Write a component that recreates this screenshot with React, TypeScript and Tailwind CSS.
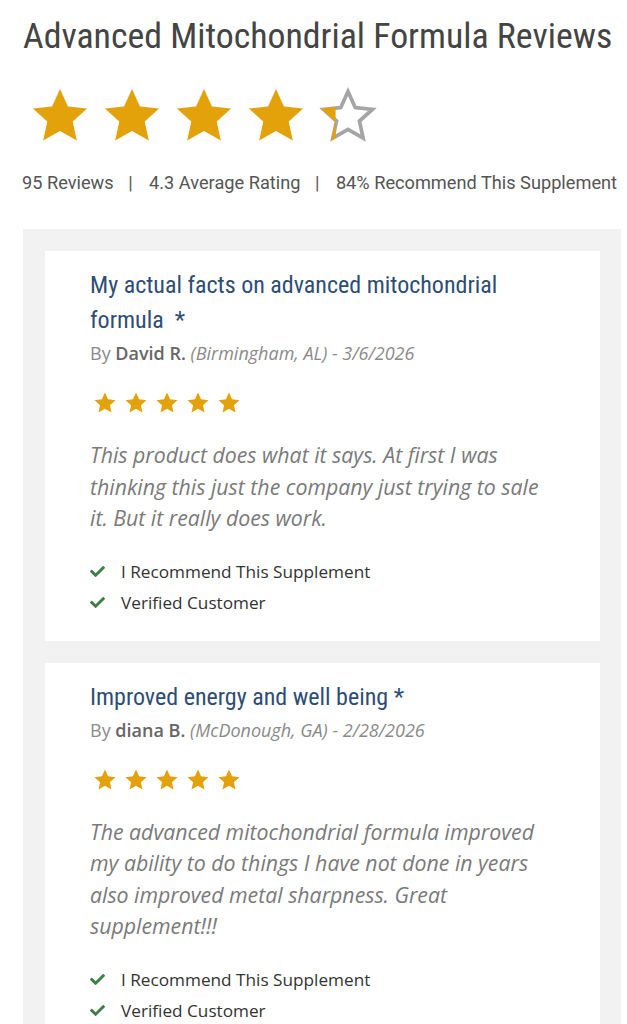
import { FaCheck } from "react-icons/fa";

const STAR = "M12 1.5l3.09 6.86 7.41.78-5.56 5.02 1.56 7.34L12 17.77l-6.5 3.73 1.56-7.34L1.5 9.14l7.41-.78L12 1.5z";

function Star({ size, fill = 1 }: { size: number; fill?: number }) {
    const id = `clip-${size}-${fill}`;
    return (
        <svg width={size} height={size} viewBox="0 0 24 24" className="shrink-0">
            <defs>
                <clipPath id={id}>
                    <rect x="0" y="0" width={24 * fill} height="24" />
                </clipPath>
            </defs>
            {fill < 1 && (
                <path d={STAR} fill="none" stroke="#a5a5a5" strokeWidth="1.6" transform="translate(12 12) scale(0.9) translate(-12 -12)" />
            )}
            <path d={STAR} fill="#e3a20a" clipPath={fill < 1 ? `url(#${id})` : undefined} />
        </svg>
    );
}

type Review = {
    title: string;
    author: string;
    place: string;
    date: string;
    body: string[];
};

const reviews: Review[] = [
    {
        title: "My actual facts on advanced mitochondrial formula\u00a0 *",
        author: "David R.",
        place: "(Birmingham, AL)",
        date: "3/6/2026",
        body: [
            "This product does what it says. At first I was",
            "thinking this just the company just trying to sale",
            "it. But it really does work.",
        ],
    },
    {
        title: "Improved energy and well being *",
        author: "diana B.",
        place: "(McDonough, GA)",
        date: "2/28/2026",
        body: [
            "The advanced mitochondrial formula improved",
            "my ability to do things I have not done in years",
            "also improved metal sharpness. Great",
            "supplement!!!",
        ],
    },
];

const condensed = "font-['Roboto_Condensed','Liberation_Sans_Narrow','DejaVu_Sans_Condensed',Roboto,sans-serif]";

function ReviewCard({ r }: { r: Review }) {
    return (
        <div className="bg-white pl-[45px] pr-[40px] pt-[17px] pb-[23px]">
            <h3 className={`${condensed} text-[24px] leading-[35px] text-[#2e4d75] [font-stretch:condensed]`}>{r.title}</h3>
            <p className="mt-[3px] font-['Open_Sans',sans-serif] text-[18px] leading-[24px] text-[#8a8a8a]">
                By <span className="font-semibold text-[#666]">{r.author}</span>{" "}
                <span className="italic">
                    {r.place} - {r.date}
                </span>
            </p>
            <div className="mt-[26px] flex gap-[7px] pl-[3px]">
                {[0, 1, 2, 3, 4].map((i) => (
                    <Star key={i} size={24} />
                ))}
            </div>
            <p className="mt-[24px] font-['Open_Sans',sans-serif] italic text-[21.3px] leading-[31.5px] text-[#7a7a7a]">
                {r.body.map((line, i) => (
                    <span key={i} className="block whitespace-nowrap">
                        {line}
                    </span>
                ))}
            </p>
            <ul className="mt-[22px] flex flex-col font-['Open_Sans',sans-serif] text-[17.2px] leading-[31px] text-[#333]">
                <li className="flex items-center gap-[16px]">
                    <FaCheck className="text-[#3e7e45] w-[15px] h-[15px]" />
                    I Recommend This Supplement
                </li>
                <li className="flex items-center gap-[16px]">
                    <FaCheck className="text-[#3e7e45] w-[15px] h-[15px]" />
                    Verified Customer
                </li>
            </ul>
        </div>
    );
}

export default function App() {
    return (
        <div className="min-h-screen bg-white">
            <div className="pl-[23px] pt-[14px]">
                <h1 className={`${condensed} text-[35.8px] leading-[44px] text-[#444] whitespace-nowrap [font-stretch:condensed]`}>
                    Advanced Mitochondrial Formula Reviews
                </h1>
                <div className="mt-[26.5px] flex gap-[10px] pl-[6px]">
                    <Star size={62} />
                    <Star size={62} />
                    <Star size={62} />
                    <Star size={62} />
                    <Star size={62} fill={0.3} />
                </div>
                <p className="mt-[24.5px] -ml-[1px] font-['Roboto',sans-serif] text-[18.2px] leading-[24px] text-[#555] whitespace-nowrap">
                    95 Reviews <span className="ml-[10px] mr-[12px]">|</span> 4.3 Average Rating{" "}
                    <span className="ml-[10px] mr-[12px]">|</span> 84% Recommend This Supplement
                </p>
            </div>
            <div className="ml-[23px] mr-[6px] mt-[34px] bg-[#f2f2f2] pl-[22px] pr-[21px] pt-[22px] flex flex-col gap-[22px]">
                {reviews.map((r) => (
                    <ReviewCard key={r.title} r={r} />
                ))}
            </div>
        </div>
    );
}
